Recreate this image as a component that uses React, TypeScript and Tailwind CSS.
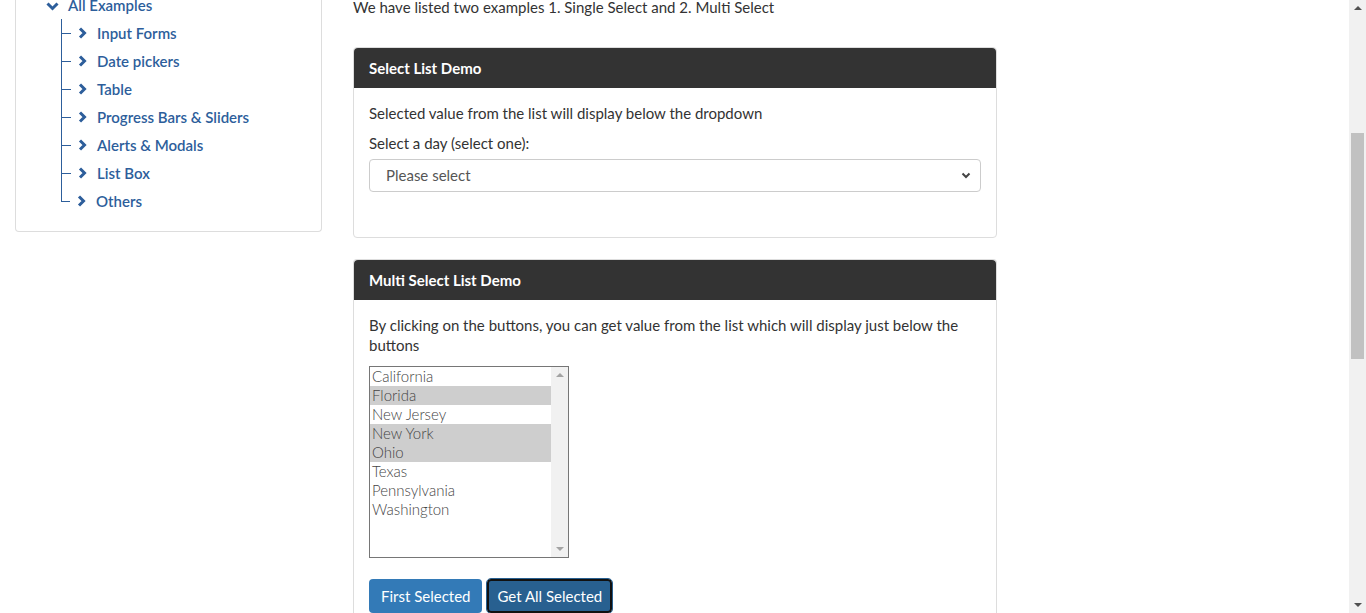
import React from 'react';

const font = { fontFamily: 'Lato, "Open Sans", sans-serif' };

const menuItems = [
  'Input Forms',
  'Date pickers',
  'Table',
  'Progress Bars & Sliders',
  'Alerts & Modals',
  'List Box',
  'Others',
];

const states = [
  { name: 'California', selected: false },
  { name: 'Florida', selected: true },
  { name: 'New Jersey', selected: false },
  { name: 'New York', selected: true },
  { name: 'Ohio', selected: true },
  { name: 'Texas', selected: false },
  { name: 'Pennsylvania', selected: false },
  { name: 'Washington', selected: false },
];

function ChevronRightIcon() {
  return (
    <svg width="9" height="12" viewBox="0 0 9 12" className="shrink-0">
      <path d="M2 1.5 L6.5 6 L2 10.5" fill="none" stroke="currentColor" strokeWidth="3" strokeLinejoin="miter" />
    </svg>
  );
}

function ChevronDownIcon() {
  return (
    <svg width="13" height="9" viewBox="0 0 13 9" className="shrink-0">
      <path d="M1.5 1.5 L6.5 6.5 L11.5 1.5" fill="none" stroke="currentColor" strokeWidth="3" strokeLinejoin="miter" />
    </svg>
  );
}

function Sidebar() {
  return (
    <div className="w-[307px] shrink-0 self-start border border-t-0 border-[#dddddd] rounded-b bg-white pb-[16px] text-[15px] font-semibold text-[#2d5e9b]">
      <div className="flex h-[14px] items-center pl-[30px] -mt-[1px]">
        <ChevronDownIcon />
        <span className="ml-[9px] leading-none -mt-[2px]">All Examples</span>
      </div>
      <div className="ml-[45px] mt-[6px] border-l border-[#2d5e9b]">
        {menuItems.map((item, i) => (
          <div
            key={item}
            className={`flex h-[28px] items-center ${i === menuItems.length - 1 ? 'bg-white -ml-px' : ''}`}
          >
            <div className="relative flex h-full w-[16px] items-center">
              {i === menuItems.length - 1 && (
                <div className="absolute left-0 top-0 h-[14px] border-l border-[#2d5e9b]" />
              )}
              <div className="h-px w-[9px] bg-[#2d5e9b]" />
            </div>
            <ChevronRightIcon />
            <span className="ml-[10px]">{item}</span>
          </div>
        ))}
      </div>
    </div>
  );
}

function CardHeader({ title }: { title: string }) {
  return (
    <div className="flex h-[40px] items-center rounded-t bg-[#333333] px-[15px] text-[15px] font-bold text-white">
      {title}
    </div>
  );
}

function SingleSelectCard() {
  return (
    <div className="rounded border border-[#dddddd] bg-white">
      <CardHeader title="Select List Demo" />
      <div className="px-[15px] pt-[15px] pb-[45px] text-[15px] text-[#333333]">
        <p className="leading-[20px]">Selected value from the list will display below the dropdown</p>
        <p className="mt-[10px] leading-[20px]">Select a day (select one):</p>
        <div className="mt-[6px] flex h-[33px] items-center justify-between rounded border border-[#cccccc] pl-[16px] pr-[9px] text-[#555555]">
          <span>Please select</span>
          <svg width="10" height="7" viewBox="0 0 10 7" className="text-[#444444]">
            <path d="M1.5 1.5 L5 5 L8.5 1.5" fill="none" stroke="currentColor" strokeWidth="2" />
          </svg>
        </div>
      </div>
    </div>
  );
}

function ListBox() {
  return (
    <div className="flex h-[192px] w-[200px] border border-[#767676] bg-white">
      <div className="flex-1">
        {states.map((s) => (
          <div
            key={s.name}
            className={`h-[19px] pl-[2px] text-[15px] font-light leading-[19px] text-[#444444] ${s.selected ? 'bg-[#cecece]' : ''}`}
          >
            {s.name}
          </div>
        ))}
      </div>
      <div className="flex w-[17px] flex-col items-center justify-between bg-[#f1f1f1] py-[6px]">
        <div className="h-0 w-0 border-x-[4px] border-b-[4px] border-x-transparent border-b-[#a3a3a3]" />
        <div className="h-0 w-0 border-x-[4px] border-t-[4px] border-x-transparent border-t-[#a3a3a3]" />
      </div>
    </div>
  );
}

function MultiSelectCard() {
  return (
    <div className="rounded-t border border-b-0 border-[#dddddd] bg-white">
      <CardHeader title="Multi Select List Demo" />
      <div className="px-[15px] pt-[15px] text-[15px] text-[#333333]">
        <p className="leading-[20px]">
          By clicking on the buttons, you can get value from the list which will display just below the buttons
        </p>
        <div className="mt-[11px]">
          <ListBox />
        </div>
        <div className="mt-[21px] flex gap-[5px]">
          <button className="h-[34px] rounded bg-[#337ab7] px-[12px] text-[15px] text-white">First Selected</button>
          <button className="h-[34px] rounded border-2 border-[#111111] bg-[#286090] px-[8px] text-[15px] text-white outline outline-1 outline-[#286090]">
            Get All Selected
          </button>
        </div>
      </div>
    </div>
  );
}

function FakeScrollbar() {
  return (
    <div className="flex w-[17px] shrink-0 flex-col items-center bg-[#f1f1f1]">
      <div className="mt-[6px] h-0 w-0 border-x-[4px] border-b-[4px] border-x-transparent border-b-[#505050]" />
      <div className="mt-[123px] h-[226px] w-[13px] bg-[#c1c1c1]" />
      <div className="flex-1" />
      <div className="mb-[6px] h-0 w-0 border-x-[4px] border-t-[4px] border-x-transparent border-t-[#505050]" />
    </div>
  );
}

export default function App() {
  return (
    <div className="flex h-[613px] overflow-hidden bg-white" style={font}>
      <div className="flex flex-1 gap-[31px] pl-[15px]">
        <Sidebar />
        <div className="w-[644px] shrink-0">
          <p className="-mt-[3px] text-[15px] leading-[20px] text-[#333333]">
            We have listed two examples 1. Single Select and 2. Multi Select
          </p>
          <div className="mt-[30px]">
            <SingleSelectCard />
          </div>
          <div className="mt-[21px]">
            <MultiSelectCard />
          </div>
        </div>
      </div>
      <FakeScrollbar />
    </div>
  );
}
